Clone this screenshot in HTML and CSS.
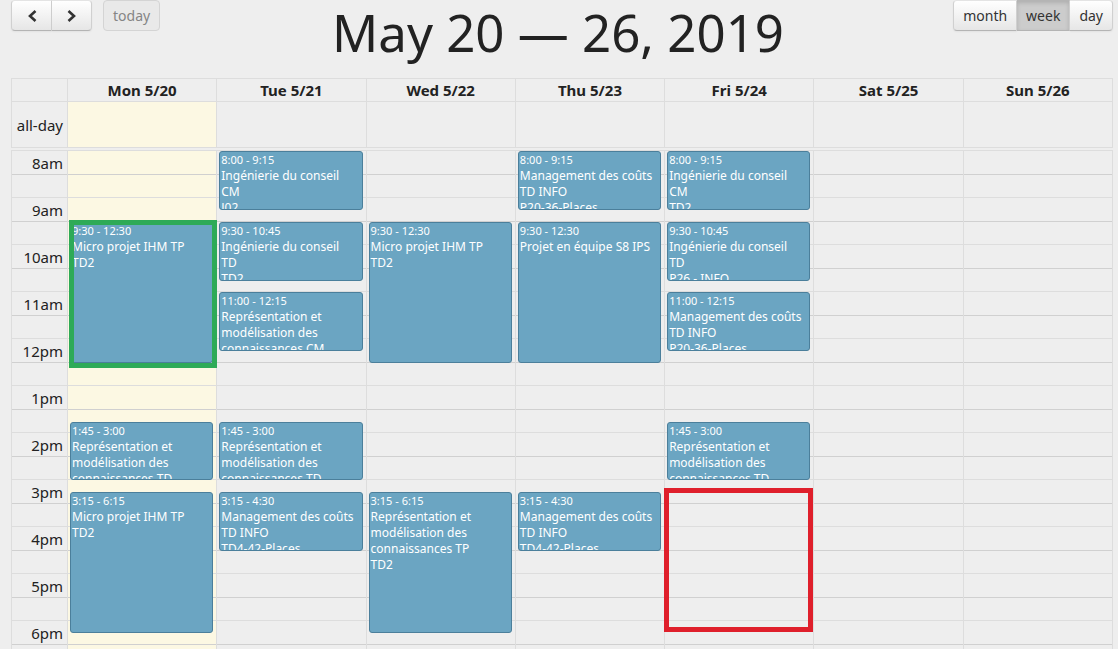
FILE: index.html
```html
<!DOCTYPE html>
<html lang="en">
<head>
<meta charset="utf-8">
<title>Calendar – May 20 — 26, 2019</title>
<link rel="stylesheet" href="styles.css">
</head>
<body>
<main class="calendar">
  <header class="toolbar">
    <div class="toolbar-side">
      <div class="button-group">
        <button class="button button-arrow" type="button" aria-label="Previous week"><svg class="arrow" viewBox="0 0 10 14" aria-hidden="true"><path d="M8.5 2 L3 7 L8.5 12"/></svg></button>
        <button class="button button-arrow" type="button" aria-label="Next week"><svg class="arrow" viewBox="0 0 10 14" aria-hidden="true"><path d="M1.5 2 L7 7 L1.5 12"/></svg></button>
      </div>
      <button class="button button-today" type="button" disabled>today</button>
    </div>
    <h1 class="title">May 20 — 26, 2019</h1>
    <div class="toolbar-side toolbar-end">
      <div class="button-group">
        <button class="button" type="button">month</button>
        <button class="button button-active" type="button" aria-pressed="true">week</button>
        <button class="button" type="button">day</button>
      </div>
    </div>
  </header>

  <table class="days">
    <thead>
      <tr><th class="axis"></th><th scope="col">Mon 5/20</th><th scope="col">Tue 5/21</th><th scope="col">Wed 5/22</th><th scope="col">Thu 5/23</th><th scope="col">Fri 5/24</th><th scope="col">Sat 5/25</th><th scope="col">Sun 5/26</th></tr>
    </thead>
    <tbody>
      <tr class="all-day"><th class="axis" scope="row">all-day</th><td class="today"></td><td></td><td></td><td></td><td></td><td></td><td></td></tr>
    </tbody>
  </table>

  <div class="time-grid">
    <div class="columns backdrop">
      <div class="day today"></div><div class="day"></div><div class="day"></div><div class="day"></div><div class="day"></div><div class="day"></div><div class="day"></div>
    </div>
    <table class="slots">
      <tbody>
        <tr class="hour"><th class="axis" scope="row">8am</th><td></td></tr><tr class="half"><td class="axis"></td><td></td></tr>
        <tr class="hour"><th class="axis" scope="row">9am</th><td></td></tr><tr class="half"><td class="axis"></td><td></td></tr>
        <tr class="hour"><th class="axis" scope="row">10am</th><td></td></tr><tr class="half"><td class="axis"></td><td></td></tr>
        <tr class="hour"><th class="axis" scope="row">11am</th><td></td></tr><tr class="half"><td class="axis"></td><td></td></tr>
        <tr class="hour"><th class="axis" scope="row">12pm</th><td></td></tr><tr class="half"><td class="axis"></td><td></td></tr>
        <tr class="hour"><th class="axis" scope="row">1pm</th><td></td></tr><tr class="half"><td class="axis"></td><td></td></tr>
        <tr class="hour"><th class="axis" scope="row">2pm</th><td></td></tr><tr class="half"><td class="axis"></td><td></td></tr>
        <tr class="hour"><th class="axis" scope="row">3pm</th><td></td></tr><tr class="half"><td class="axis"></td><td></td></tr>
        <tr class="hour"><th class="axis" scope="row">4pm</th><td></td></tr><tr class="half"><td class="axis"></td><td></td></tr>
        <tr class="hour"><th class="axis" scope="row">5pm</th><td></td></tr><tr class="half"><td class="axis"></td><td></td></tr>
        <tr class="hour"><th class="axis" scope="row">6pm</th><td></td></tr><tr class="half"><td class="axis"></td><td></td></tr>
      </tbody>
    </table>
    <div class="columns">
      <div class="day">
        <article class="event" style="grid-row: 7 / 19"><div class="time">9:30 - 12:30</div><div>Micro projet IHM TP</div><div>TD2</div></article>
        <article class="event" style="grid-row: 24 / 29"><div class="time">1:45 - 3:00</div><div>Représentation et modélisation des connaissances TD</div></article>
        <article class="event" style="grid-row: 30 / 42"><div class="time">3:15 - 6:15</div><div>Micro projet IHM TP</div><div>TD2</div></article>
        <div class="mark mark-from" style="grid-row: 7 / 19"></div>
      </div>
      <div class="day">
        <article class="event" style="grid-row: 1 / 6"><div class="time">8:00 - 9:15</div><div>Ingénierie du conseil CM</div><div>J02</div></article>
        <article class="event" style="grid-row: 7 / 12"><div class="time">9:30 - 10:45</div><div>Ingénierie du conseil TD</div><div>TD2</div></article>
        <article class="event" style="grid-row: 13 / 18"><div class="time">11:00 - 12:15</div><div>Représentation et modélisation des connaissances CM</div></article>
        <article class="event" style="grid-row: 24 / 29"><div class="time">1:45 - 3:00</div><div>Représentation et modélisation des connaissances TD</div></article>
        <article class="event" style="grid-row: 30 / 35"><div class="time">3:15 - 4:30</div><div>Management des coûts TD INFO</div><div>TD4-42-Places</div></article>
      </div>
      <div class="day">
        <article class="event" style="grid-row: 7 / 19"><div class="time">9:30 - 12:30</div><div>Micro projet IHM TP</div><div>TD2</div></article>
        <article class="event" style="grid-row: 30 / 42"><div class="time">3:15 - 6:15</div><div>Représentation et modélisation des connaissances TP</div><div>TD2</div></article>
      </div>
      <div class="day">
        <article class="event" style="grid-row: 1 / 6"><div class="time">8:00 - 9:15</div><div>Management des coûts TD INFO</div><div>P20-36-Places</div></article>
        <article class="event" style="grid-row: 7 / 19"><div class="time">9:30 - 12:30</div><div>Projet en équipe S8 IPS</div></article>
        <article class="event" style="grid-row: 30 / 35"><div class="time">3:15 - 4:30</div><div>Management des coûts TD INFO</div><div>TD4-42-Places</div></article>
      </div>
      <div class="day">
        <article class="event" style="grid-row: 1 / 6"><div class="time">8:00 - 9:15</div><div>Ingénierie du conseil CM</div><div>TD2</div></article>
        <article class="event" style="grid-row: 7 / 12"><div class="time">9:30 - 10:45</div><div>Ingénierie du conseil TD</div><div>P26 - INFO</div></article>
        <article class="event" style="grid-row: 13 / 18"><div class="time">11:00 - 12:15</div><div>Management des coûts TD INFO</div><div>P20-36-Places</div></article>
        <article class="event" style="grid-row: 24 / 29"><div class="time">1:45 - 3:00</div><div>Représentation et modélisation des connaissances TD</div></article>
        <div class="mark mark-to" style="grid-row: 30 / 42"></div>
      </div>
      <div class="day"></div>
      <div class="day"></div>
    </div>
  </div>
</main>
</body>
</html>
```
FILE: styles.css
```css
:root {
  --line: #dddddd;
  --axis: 56px;
}

* { box-sizing: border-box; }

body {
  margin: 0;
  background: #eeeeee;
  color: #222222;
  font-family: "Noto Sans", "Open Sans", sans-serif;
  font-size: 15px;
}

.calendar {
  height: 100vh;
  overflow: hidden;
  padding: 0 5px 0 11px;
}

/* Toolbar */
.toolbar {
  display: grid;
  grid-template-columns: 1fr auto 1fr;
  align-items: start;
  height: 78px;
}

.toolbar-side { display: flex; gap: 11px; }
.toolbar-end { justify-content: flex-end; }
.button-group { display: flex; }

.button {
  height: 31px;
  padding: 0 9px;
  border: 1px solid #d0d0d0;
  border-top-color: #e4e4e4;
  border-bottom-color: #b4b4b4;
  border-radius: 0;
  background: linear-gradient(#ffffff, #e6e6e6);
  box-shadow: 0 1px 2px rgba(0, 0, 0, 0.05);
  color: #333333;
  font: inherit;
  font-size: 14px;
  line-height: 20px;
}

.button-group .button + .button { border-left-width: 0; }
.button-group .button:first-child { border-radius: 4px 0 0 4px; }
.button-group .button:last-child { border-radius: 0 4px 4px 0; }

.button-arrow {
  display: grid;
  place-items: center;
  width: 41px;
  padding: 0;
}
.button-arrow + .button-arrow { width: 40px; }

.arrow {
  width: 10px;
  height: 14px;
  fill: none;
  stroke: #333333;
  stroke-width: 2.6;
}

.button-group .button-active {
  border-top-color: #b4b4b4;
  background: #cccccc;
  box-shadow: inset 0 2px 4px rgba(0, 0, 0, 0.15);
}

.button-today {
  border-color: #d4d4d4;
  border-radius: 4px;
  background: #e9e9e9;
  box-shadow: none;
  color: #858585;
}

.title {
  margin: 0;
  padding-right: 8px;
  font-size: 51px;
  font-weight: 400;
  line-height: 64px;
  white-space: nowrap;
}

/* Day headings and all-day row */
.days, .slots {
  width: 100%;
  border-spacing: 0;
  table-layout: fixed;
}

.days {
  border: solid var(--line);
  border-width: 1px 1px 1px 0;
}

.days th, .days td {
  padding: 0;
  border-left: 1px solid var(--line);
}

.days thead th { height: 22px; line-height: 22px; }
.days .all-day th, .days .all-day td {
  height: 46px;
  border-top: 1px solid var(--line);
}

.days .axis, .slots .axis { width: var(--axis); }

tbody th.axis {
  padding: 0 4px 0 0;
  font-weight: 400;
  text-align: right;
  white-space: nowrap;
}

.today { background: #fcf8e3; }

/* Time grid */
.time-grid {
  position: relative;
  margin-top: 2px;
  border: solid var(--line);
  border-width: 0 1px;
}

.slots { position: relative; }

.slots th, .slots td {
  padding-top: 0;
  padding-bottom: 0;
  border-top: 1px solid var(--line);
  line-height: 20px;
}
.slots th.axis { padding-right: 5px; }
.slots .hour > * { height: 24px; }
.slots .half > * { height: 23px; border-top-color: #d0d0d0; }

.columns {
  position: absolute;
  inset: 0;
  display: grid;
  grid-template-columns: repeat(7, minmax(0, 1fr));
  padding-left: 55px;
}

.day {
  display: grid;
  grid-template-columns: minmax(0, 1fr);
  grid-template-rows: repeat(11, 12px 12px 12px 11px);
  border-left: 1px solid var(--line);
}

.event {
  grid-column: 1;
  margin: 1px 3px -1px 2px;
  padding: 0 5px 0 1px;
  overflow: hidden;
  border: 1px solid #4b7f9b;
  border-radius: 3px;
  background: #6ba5c2;
  color: #ffffff;
  font-size: 12px;
  line-height: 16px;
}

.time { font-size: 11px; }

.mark {
  z-index: 1;
  grid-column: 1;
  border: 5px solid;
}
.mark-from { margin: -1px -1px -6px 1px; border-color: #2eaa57; }
.mark-to { margin: -3px 0 0 -1px; border-color: #df1f2b; }
```
